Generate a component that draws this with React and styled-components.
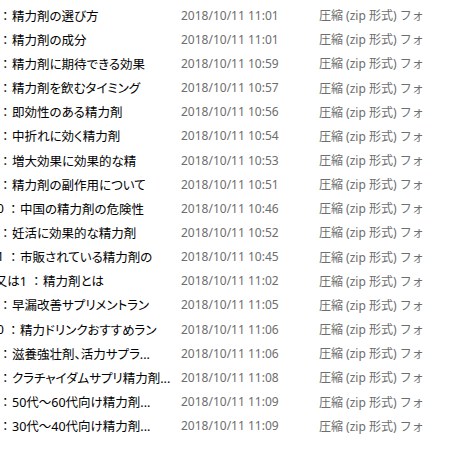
import React from "react";
import styled, { createGlobalStyle } from "styled-components";

const Global = createGlobalStyle`
  html, body { margin: 0; padding: 0; background: #ffffff; overflow: hidden; }
  body { font-family: "Noto Sans", "Noto Sans CJK JP", sans-serif; }
`;

const List = styled.div`
  width: 460px;
  height: 460px;
  padding-top: 3px;
  box-sizing: border-box;
  overflow: hidden;
  background: #fff;
`;

const Row = styled.div`
  display: grid;
  grid-template-columns: 181px 138px 1fr;
  height: 24.17px;
  align-items: center;
  white-space: nowrap;
`;

const NameCell = styled.div`
  display: flex;
  align-items: center;
  overflow: hidden;
  color: #000;
  font-family: "Noto Sans", "Noto Sans CJK JP", sans-serif;
  font-size: 12.5px;
  font-feature-settings: "palt";
`;

const Lead = styled.span`
  display: inline-flex;
  justify-content: flex-end;
  overflow: hidden;
  flex: none;
  box-sizing: border-box;
  width: ${(p) => p.$w}px;
  padding-right: 4px;
`;

const Colon = styled.span`
  display: inline-flex;
  justify-content: flex-start;
  box-sizing: border-box;
  width: 12px;
  padding-left: 2px;
  flex: none;
`;

const Title = styled.span`
  flex: none;
`;

const DateCell = styled.div`
  color: #6d6d6d;
  font-family: "Noto Sans", sans-serif;
  font-size: 12px;
`;

const TypeCell = styled.div`
  color: #6d6d6d;
  font-family: "Noto Sans", "Noto Sans CJK JP", sans-serif;
  font-size: 12px;
`;

const rows = [
  ["", 0, "精力剤の選び方", "11:01"],
  ["", 0, "精力剤の成分", "11:01"],
  ["", 0, "精力剤に期待できる効果", "10:59"],
  ["", 0, "精力剤を飲むタイミング", "10:57"],
  ["", 0, "即効性のある精力剤", "10:56"],
  ["", 0, "中折れに効く精力剤", "10:54"],
  ["", 0, "増大効果に効果的な精", "10:53"],
  ["", 0, "精力剤の副作用について", "10:51"],
  ["10", 8, "中国の精力剤の危険性", "10:46"],
  ["", 0, "妊活に効果的な精力剤", "10:52"],
  ["11", 8, "市販されている精力剤の", "10:45"],
  ["又は1", 31, "精力剤とは", "11:02"],
  ["", 0, "早漏改善サプリメントラン", "11:05"],
  ["10", 8, "精力ドリンクおすすめラン", "11:06"],
  ["", 0, "滋養強壮剤、活力サプラ...", "11:06"],
  ["", 0, "クラチャイダムサプリ精力剤...", "11:08"],
  ["", 0, "50代～60代向け精力剤...", "11:09"],
  ["", 0, "30代～40代向け精力剤...", "11:09"],
];

export default function App() {
  return (
    <>
      <Global />
      <List>
        {rows.map(([lead, w, title, time], i) => (
          <Row key={i}>
            <NameCell>
              {lead && <Lead $w={w}>{lead}</Lead>}
              <Colon>：</Colon>
              <Title>{title}</Title>
            </NameCell>
            <DateCell>2018/10/11 {time}</DateCell>
            <TypeCell>圧縮 (zip 形式) フォ</TypeCell>
          </Row>
        ))}
      </List>
    </>
  );
}
